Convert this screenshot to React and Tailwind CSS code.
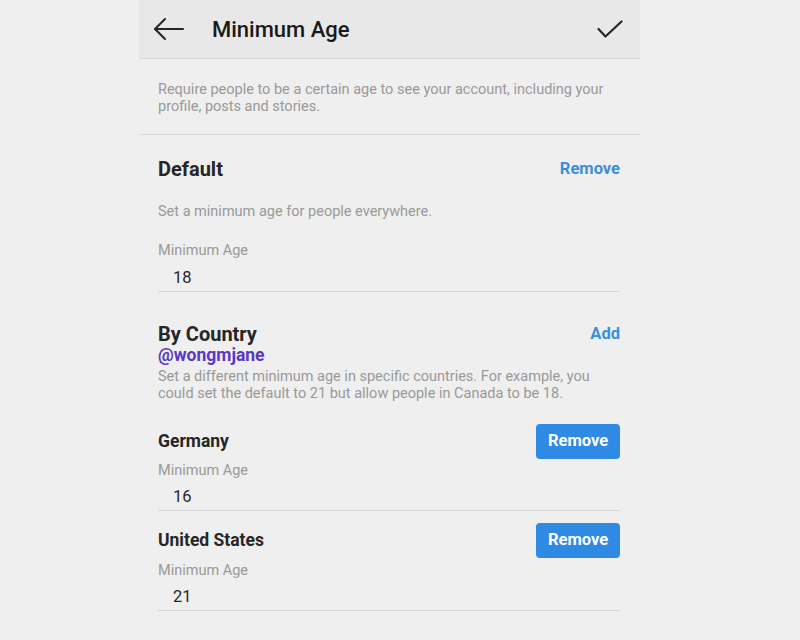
import React from 'react';

const font = { fontFamily: 'Roboto, "Noto Sans", sans-serif' };

function AgeField({ value, className = '' }) {
  return (
    <div className={className}>
      <div className="text-[14.5px] leading-[17px] text-[#999]">Minimum Age</div>
      <div className="mt-[8.5px] border-b border-[#d6d6d6] pb-[3px] pl-[15px] text-[16.5px] leading-[20px] text-[#262626]">
        {value}
      </div>
    </div>
  );
}

function CountryRow({ name, className = '' }) {
  return (
    <div className={`flex items-center justify-between ${className}`}>
      <span className="text-[17.5px] font-bold text-[#262626]">{name}</span>
      <button className="h-[35px] w-[84px] rounded-[4px] bg-[#2e8ae3] text-[16.5px] font-bold text-white">
        Remove
      </button>
    </div>
  );
}

export default function App() {
  return (
    <div className="min-h-[640px] w-full bg-[#efefef]" style={font}>
      <div className="ml-[139px] w-[501px]">
        {/* Header */}
        <div className="flex h-[59px] items-center border-b border-[#d9d9d9] bg-[#e8e8e8] pl-[14px] pr-[17px]">
          <svg width="31" height="24" viewBox="0 0 31 24" fill="none" stroke="#262626" strokeWidth="2" strokeLinecap="round" strokeLinejoin="round">
            <path d="M30 12H2" />
            <path d="M12 2L2 12l10 10" />
          </svg>
          <h1 className="ml-[28px] text-[22px] font-medium text-[#1a1a1a]">Minimum Age</h1>
          <svg className="ml-auto" width="26" height="18" viewBox="0 0 26 18" fill="none" stroke="#262626" strokeWidth="2.2" strokeLinecap="round" strokeLinejoin="round">
            <path d="M1.5 9l7 7.5L24.5 1.5" />
          </svg>
        </div>

        <div className="border-b border-[#d9d9d9] px-[19px] pb-[19px] pt-[22px] text-[14.5px] leading-[17px] text-[#999]">
          Require people to be a certain age to see your account, including your profile, posts and stories.
        </div>

        <div className="pl-[19px] pr-[20px]">
          {/* Default */}
          <div className="mt-[22px] flex items-center justify-between leading-[24px]">
            <span className="text-[20px] font-bold text-[#262626]">Default</span>
            <span className="text-[16.5px] font-bold text-[#3a8fdb]">Remove</span>
          </div>
          <p className="mt-[22px] text-[14.5px] leading-[17px] text-[#999]">
            Set a minimum age for people everywhere.
          </p>
          <AgeField value="18" className="mt-[22px]" />

          {/* By country */}
          <div className="mt-[31px] flex items-center justify-between leading-[22px]">
            <span className="text-[20px] font-bold text-[#262626]">By Country</span>
            <span className="text-[16.5px] font-bold text-[#3a8fdb]">Add</span>
          </div>
          <div className="text-[17.5px] font-bold leading-[20px] text-[#5a37c4]">@wongmjane</div>
          <p className="mt-[3.5px] text-[14.5px] leading-[17px] text-[#999]">
            Set a different minimum age in specific countries. For example, you could set the default to 21 but allow people in Canada to be 18.
          </p>

          <CountryRow name="Germany" className="mt-[22px]" />
          <AgeField value="16" className="mt-[2.5px]" />

          <CountryRow name="United States" className="mt-[12px]" />
          <AgeField value="21" className="mt-[3.5px]" />
        </div>
      </div>
    </div>
  );
}
